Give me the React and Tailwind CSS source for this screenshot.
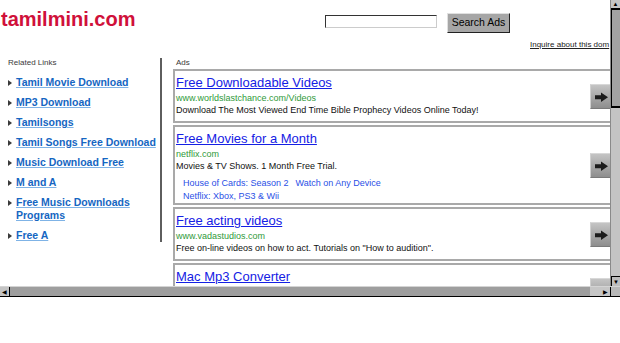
const links = [
  "Tamil Movie Download",
  "MP3 Download",
  "Tamilsongs",
  "Tamil Songs Free Download",
  "Music Download Free",
  "M and A",
  "Free Music Downloads Programs",
  "Free A",
];

function ArrowButton() {
  return (
    <div className="self-center w-[23px] h-[25px] shrink-0 bg-gradient-to-b from-[#c4c4c4] to-[#8e8e8e] border border-[#7a7a7a] border-t-[#d8d8d8] border-l-[#d0d0d0]">
      <svg width="23" height="25" viewBox="0 0 23 25" className="-mt-px -ml-px">
        <path d="M5 11.3 H11 V8.5 L18 13.3 L11 18.1 V15.3 H5 Z" fill="#1c1c1c" />
      </svg>
    </div>
  );
}

function Ad({ title, url, desc, children }) {
  return (
    <div className="flex border-2 border-[#a9a9a9] bg-white">
      <div className={"flex-1 pl-[1px] pt-[4px] " + (children ? "pb-0" : "pb-[5px]")}>
        <div className="text-[13px] leading-[15px] text-[#1420e4] underline decoration-[#1420e4] whitespace-nowrap">
          {title}
        </div>
        <div className="mt-[2px] text-[9px] leading-[12px] text-[#2f9a3a] whitespace-nowrap">{url}</div>
        <div className="text-[9px] leading-[12px] text-[#111] whitespace-nowrap">{desc}</div>
        {children}
      </div>
      <ArrowButton />
    </div>
  );
}

export default function App() {
  return (
    <div className="w-[620px] h-[343px] bg-white overflow-hidden font-['Liberation_Sans',Arial,sans-serif]">
      <div className="flex flex-col h-[297px]">
        <div className="flex h-[286px]">
          <div className="w-[610px] overflow-hidden">
            <div className="w-[660px]">
              {/* header */}
              <div className="flex h-[58px]">
                <div className="w-[325px] pl-[1px] pt-[8px] text-[20px] leading-[23px] font-bold text-[#d0103a]">
                  tamilmini.com
                </div>
                <div className="flex flex-col">
                  <div className="flex items-start pt-[13px]">
                    <div className="mt-[2px] w-[112px] h-[13px] bg-white border border-[#333] border-r-[#ccc] border-b-[#ccc]"></div>
                    <div className="ml-[10px] w-[63px] h-[20px] flex items-center justify-center bg-[#a6a6a6] border border-[#e0e0e0] border-r-[#222] border-b-[#222] text-[10.5px] text-black">
                      Search Ads
                    </div>
                  </div>
                  <div className="ml-[205px] mt-[7px] text-[8px] leading-[10px] text-[#222] underline whitespace-nowrap">
                    Inquire about this dom
                  </div>
                </div>
              </div>

              {/* main */}
              <div className="flex items-start">
                <div className="w-[162px] border-r-2 border-[#5e5e5e]">
                  <div className="pl-[8px] h-[11px] text-[8px] leading-[10px] text-[#3a3a3a]">Related Links</div>
                  <ul className="mt-[7px] pl-[8px] flex flex-col gap-[7px]">
                    {links.map((l) => (
                      <li key={l} className="flex">
                        <span className="w-[8px] shrink-0">
                          <span className="block mt-[4px] w-0 h-0 border-y-[3px] border-y-transparent border-l-[4px] border-l-[#3a3a3a]"></span>
                        </span>
                        <span className="w-[144px] text-[10.5px] leading-[13px] font-bold text-[#1566c2] underline decoration-[#7fb3e6]">
                          {l}
                        </span>
                      </li>
                    ))}
                  </ul>
                </div>

                <div className="pl-[11px]">
                  <div className="pl-[3px] h-[11px] text-[8px] leading-[10px] text-[#3a3a3a]">Ads</div>
                  <div className="w-[442px] flex flex-col gap-[2px]">
                    <Ad
                      title="Free Downloadable Videos"
                      url="www.worldslastchance.com/Videos"
                      desc="Download The Most Viewed End Time Bible Prophecy Videos Online Today!"
                    />
                    <Ad
                      title="Free Movies for a Month"
                      url="netflix.com"
                      desc="Movies & TV Shows. 1 Month Free Trial."
                    >
                      <div className="mt-[5px] pl-[7px] text-[9px] leading-[13px] text-[#2a4fe6]">
                        <div className="flex gap-[7px] whitespace-nowrap">
                          <span>House of Cards: Season 2</span>
                          <span>Watch on Any Device</span>
                        </div>
                        <div className="whitespace-nowrap">Netflix: Xbox, PS3 &amp; Wii</div>
                      </div>
                    </Ad>
                    <Ad
                      title="Free acting videos"
                      url="www.vadastudios.com"
                      desc={'Free on-line videos on how to act. Tutorials on "How to audition".'}
                    />
                    <Ad title="Mac Mp3 Converter" url={"\u00a0"} desc={"\u00a0"} />
                  </div>
                </div>
              </div>
            </div>
          </div>

          {/* vertical scrollbar */}
          <div className="w-[10px] flex flex-col bg-[#c4c4c4] border-l border-[#8a8a8a]">
            <div className="h-[8px] flex items-center justify-center text-[6px] leading-none text-black">▲</div>
            <div className="h-[100px] bg-[#a2a2a2] border-t-2 border-b-2 border-l border-black"></div>
            <div className="flex-1"></div>
            <div className="h-[10px] flex items-center justify-center text-[6px] leading-none text-black border-t border-l border-black bg-[#bdbdbd]">▼</div>
          </div>
        </div>

        {/* horizontal scrollbar */}
        <div className="flex h-[11px] border-t border-[#d4d4d4] border-b border-b-black">
          <div className="w-[10px] flex items-center justify-center bg-[#c4c4c4] border-r border-black text-[6px] leading-none text-black">◀</div>
          <div className="flex-1 bg-[#9e9e9e]"></div>
          <div className="w-[20px] flex items-center justify-end pr-[2px] bg-[#c6c6c6] text-[6px] leading-none text-black">▶</div>
          <div className="w-[10px] bg-[#b8b8b8] border-l border-black"></div>
        </div>
      </div>
    </div>
  );
}
